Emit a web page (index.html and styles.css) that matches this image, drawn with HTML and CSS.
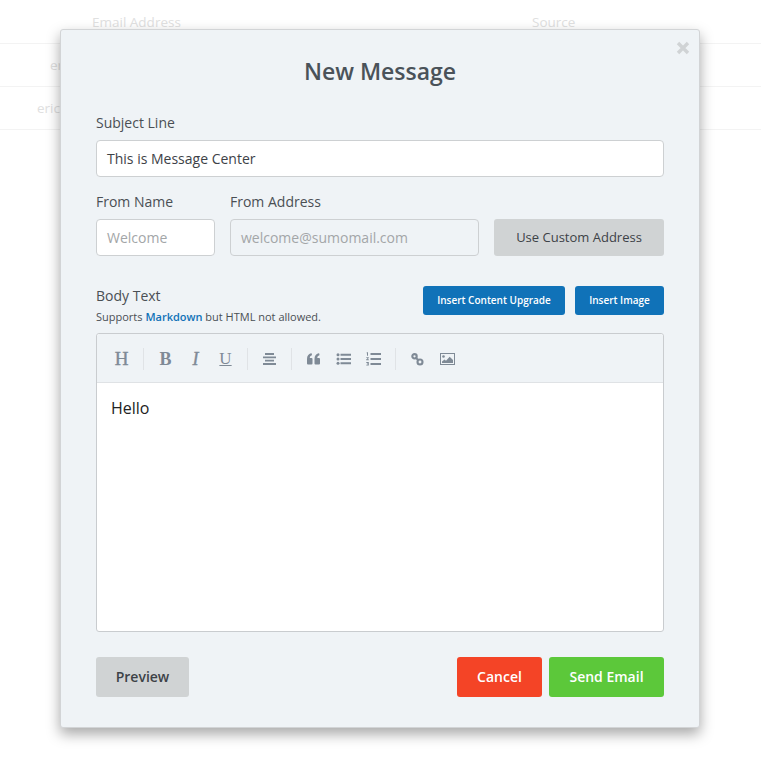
FILE: index.html
```html
<!DOCTYPE html>
<html lang="en">
<head>
    <meta charset="UTF-8">
    <meta name="viewport" content="width=device-width, initial-scale=1.0">
    <title>New Message</title>
    <link rel="stylesheet" href="styles.css">
</head>
<body>
    <!-- faded table behind the modal -->
    <div class="bg-table">
        <div class="bg-row bg-head"><span class="bg-email">Email Address</span><span class="bg-source">Source</span></div>
        <div class="bg-row"><span class="bg-cell-a">er</span></div>
        <div class="bg-row"><span class="bg-cell-b">eric</span></div>
    </div>

    <div class="modal">
        <svg class="close" width="14" height="14" viewBox="0 0 14 14"><path d="M2 2l10 10M12 2L2 12"/></svg>
        <h1 class="title">New Message</h1>

        <label class="label">Subject Line</label>
        <div class="input input-subject">This is Message Center</div>

        <div class="from-row">
            <div class="from-name">
                <label class="label">From Name</label>
                <div class="input placeholder">Welcome</div>
            </div>
            <div class="from-address">
                <label class="label">From Address</label>
                <div class="input input-disabled placeholder">welcome@sumomail.com</div>
            </div>
            <button class="btn btn-grey btn-custom">Use Custom Address</button>
        </div>

        <div class="body-head">
            <div>
                <label class="label">Body Text</label>
                <p class="hint">Supports <a href="#">Markdown</a> but HTML not allowed.</p>
            </div>
            <div class="insert-btns">
                <button class="btn btn-blue btn-upgrade">Insert Content Upgrade</button>
                <button class="btn btn-blue btn-image">Insert Image</button>
            </div>
        </div>

        <div class="editor">
            <div class="toolbar">
                <span class="tool tool-h">H</span>
                <i class="sep"></i>
                <span class="tool tool-b">B</span>
                <span class="tool tool-i">I</span>
                <span class="tool tool-u">U</span>
                <i class="sep"></i>
                <svg class="icon" width="15" height="12" viewBox="0 0 15 12"><path d="M3 0h9v2H3zM1 3.500h13v1.800H1zM3 6.800h9v1.800H3zM1 10h13v2H1z"/></svg>
                <i class="sep"></i>
                <svg class="icon" width="15" height="12" viewBox="0 0 15 12"><path d="M6.500 6v4.500a1 1 0 0 1-1 1H2a1 1 0 0 1-1-1V6C1 3 2.500.8 5 .3c.6-.1.900.2.900.7v1.200C4.500 2.600 3.800 3.500 3.800 5h1.700a1 1 0 0 1 1 1zM14 6v4.500a1 1 0 0 1-1 1H9.500a1 1 0 0 1-1-1V6c0-3 1.500-5.200 4-5.700.6-.1.900.2.900.7v1.200c-1.400.4-2.100 1.300-2.100 2.800H13a1 1 0 0 1 1 1z"/></svg>
                <svg class="icon icon-gap" width="15" height="12" viewBox="0 0 15 12"><circle cx="2" cy="1.700" r="1.500"/><circle cx="2" cy="6" r="1.500"/><circle cx="2" cy="10.300" r="1.500"/><path d="M4.500.700H15v2H4.500zM4.500 5H15v2H4.500zM4.500 9.300H15v2H4.500z"/></svg>
                <svg class="icon icon-gap" width="15" height="14" viewBox="0 0 15 14"><path d="M.8.300h1.200v3.500H1V1.200H.6zM.3 5.200h2.500v.9l-1.300 1.200h1.300v.9H.2v-.8l1.500-1.400H.3zM.3 10h2.500v3.600H.3v-.8h1.500v-.6H.9v-.7h.9v-.6H.3z"/><path d="M4.500 1h10.500v2H4.500zM4.500 6h10.500v2H4.500zM4.500 11h10.500v2H4.500z"/></svg>
                <i class="sep"></i>
                <svg class="icon icon-link" width="15" height="13" viewBox="0 0 15 13"><circle cx="4.500" cy="3.300" r="2.200"/><circle cx="10" cy="9" r="2.500"/><path d="M6 5l2.500 2.200"/></svg>
                <svg class="icon icon-gap" width="15" height="12" viewBox="0 0 15 12"><path fill-rule="evenodd" d="M0 0h15v12H0zM1 1v10h13V1z"/><circle cx="3.500" cy="3.500" r="1.300"/><path d="M2 10V8.500l2.500-2 1.500 1.300 3.700-4L13 7v3z"/></svg>
            </div>
            <div class="editor-body">Hello</div>
        </div>

        <div class="footer">
            <button class="btn btn-grey btn-footer btn-preview">Preview</button>
            <div class="footer-right">
                <button class="btn btn-red btn-footer btn-cancel">Cancel</button>
                <button class="btn btn-green btn-footer btn-send">Send Email</button>
            </div>
        </div>
    </div>
</body>
</html>
```

FILE: styles.css
```css
* {
    box-sizing: border-box;
}
body {
    margin: 0;
    height: 780px;
    overflow: hidden;
    background-color: white;
    font-family: "Open Sans", sans-serif;
    color: #4a4f54;
}
.bg-table {
    padding-top: 1px;
}
.bg-row {
    height: 43px;
    border-bottom: 1px solid #f3f3f3;
    display: flex;
    align-items: center;
    font-size: 13.5px;
    color: #e0e0e0;
    white-space: nowrap;
}
.bg-email {
    margin-left: 92px;
    width: 440px;
}
.bg-cell-a {
    margin-left: 50px;
}
.bg-cell-b {
    margin-left: 37px;
}
.modal {
    position: absolute;
    top: 29px;
    left: 60px;
    width: 640px;
    height: 699px;
    padding: 0 35px;
    background-color: #eff3f6;
    border: 1px solid #d2d4d6;
    border-radius: 3px;
    box-shadow: 0 6px 14px rgba(0, 0, 0, 0.35);
}
.close {
    position: absolute;
    top: 11px;
    right: 9px;
    fill: none;
    stroke: #d0d3d5;
    stroke-width: 3.4;
}
.title {
    margin: 25px 0 26px;
    font-size: 23px;
    line-height: 32px;
    font-weight: 600;
    text-align: center;
    color: #4a5259;
}
.label {
    display: block;
    font-size: 14px;
    line-height: 20px;
    margin-bottom: 7px;
}
.input {
    height: 37px;
    padding: 0 10px;
    line-height: 35px;
    font-size: 14px;
    background-color: white;
    border: 1px solid #cdd0d2;
    border-radius: 4px;
    color: #3d4247;
}
.input-subject {
    margin-bottom: 15px;
}
.placeholder {
    color: #a3a6a8;
}
.input-disabled {
    background-color: #eff3f6;
}
.from-row {
    display: flex;
    align-items: flex-end;
    gap: 15px;
}
.from-name {
    width: 119px;
}
.from-address {
    width: 249px;
}
.btn {
    border: none;
    border-radius: 3px;
    padding: 0 0 2px;
    font-family: "Open Sans", sans-serif;
    cursor: pointer;
}
.btn-grey {
    background-color: #d0d3d4;
    color: #3d4247;
}
.btn-blue {
    background-color: #1072b8;
    color: white;
    font-size: 10px;
    font-weight: 600;
    height: 29px;
}
.btn-red {
    background-color: #f44426;
    color: white;
}
.btn-green {
    background-color: #5cc83a;
    color: white;
}
.btn-custom {
    width: 170px;
    height: 37px;
    font-size: 13px;
}
.body-head {
    display: flex;
    justify-content: space-between;
    margin-top: 30px;
    height: 47px;
}
.body-head .label {
    margin-bottom: 3px;
}
.hint {
    margin: 0;
    font-size: 11px;
    line-height: 15px;
}
.hint a {
    color: #1072b8;
    font-weight: 600;
    text-decoration: none;
}
.insert-btns {
    display: flex;
    gap: 10px;
}
.btn-upgrade {
    width: 142px;
}
.btn-image {
    width: 89px;
}
.editor {
    height: 299px;
    border: 1px solid #c9cccf;
    border-radius: 3px;
    background-color: white;
}
.toolbar {
    height: 49px;
    padding: 2px 0 0 17px;
    display: flex;
    align-items: center;
    background-color: #eff3f6;
    border-bottom: 1px solid #dfe2e5;
    border-radius: 3px 3px 0 0;
}
.tool {
    font-family: "Liberation Serif", serif;
    font-size: 18px;
    color: #7f8a96;
    width: 15px;
    text-align: center;
}
.tool-h {
    font-size: 19px;
    -webkit-text-stroke: 0.4px #7f8a96;
}
.tool-b {
    font-weight: bold;
    margin-right: 15px;
}
.tool-i {
    font-style: italic;
    -webkit-text-stroke: 0.4px #7f8a96;
    margin-right: 15px;
}
.tool-u {
    font-size: 17px;
    text-decoration: underline;
}
.sep {
    width: 1px;
    height: 22px;
    background-color: #e0e3e6;
    margin: 0 14px;
}
.icon {
    fill: #7f8a96;
}
.icon-gap {
    margin-left: 15px;
}
.icon-link {
    fill: none;
    stroke: #7f8a96;
    stroke-width: 2.1;
}
.editor-body {
    padding: 13px 14px;
    font-size: 16px;
    line-height: 24px;
    color: #222;
}
.footer {
    display: flex;
    justify-content: space-between;
    margin-top: 25px;
}
.footer-right {
    display: flex;
    gap: 7px;
}
.btn-footer {
    height: 40px;
    font-size: 14px;
    font-weight: 600;
}
.btn-preview {
    width: 93px;
}
.btn-cancel {
    width: 85px;
}
.btn-send {
    width: 115px;
}
```
